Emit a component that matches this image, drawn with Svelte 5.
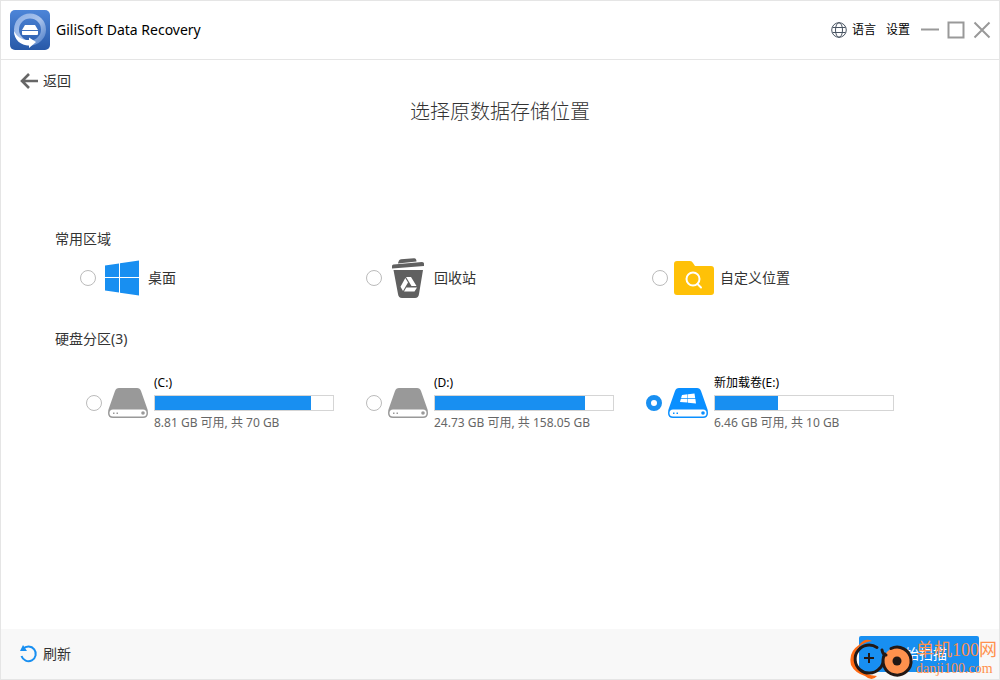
<script>
	const places = [
		{ id: "desktop", label: "桌面" },
		{ id: "trash", label: "回收站" },
		{ id: "custom", label: "自定义位置" }
	];

	const drives = [
		{ id: "c", name: "(C:)", free: "8.81", total: "70", used: 87.4 },
		{ id: "d", name: "(D:)", free: "24.73", total: "158.05", used: 84.4 },
		{ id: "e", name: "新加载卷(E:)", free: "6.46", total: "10", used: 35.4 }
	];

	let selected = $state("e");
</script>

<div class="window">
	<header class="titlebar">
		<svg class="logo" viewBox="0 0 40 40" aria-hidden="true">
			<defs>
				<linearGradient id="logo-bg" x1="0" y1="0" x2="0" y2="1">
					<stop offset="0" stop-color="#4d85d8" />
					<stop offset="1" stop-color="#2859a8" />
				</linearGradient>
				<linearGradient id="logo-ring" x1="0" y1="0" x2="1" y2="1">
					<stop offset="0" stop-color="#8eb0e6" />
					<stop offset="0.5" stop-color="#a9c3ec" />
					<stop offset="1" stop-color="#5583ca" />
				</linearGradient>
			</defs>
			<rect width="40" height="40" rx="5" fill="url(#logo-bg)" />
			<circle cx="20" cy="19.5" r="13.5" fill="none" stroke="url(#logo-ring)" stroke-width="5" />
			<path d="M4 21C4 30 11 35.500 19 35.500V38L26 32L19 27.500V30C13 30.500 7 27.500 4 21Z" fill="#fff" />
			<path d="M15 15H25L28 20V24Q28 25 27 25H13Q12 25 12 24V20Z" fill="#fff" />
			<path d="M12 20.500H28" stroke="#3d70be" />
		</svg>
		<h1>GiliSoft Data Recovery</h1>
		<nav class="tools">
			<button class="tool">
				<svg width="16" height="16" viewBox="0 0 16 16" fill="none" stroke="#4a5563" aria-hidden="true">
					<circle cx="8" cy="8" r="7.3" />
					<ellipse cx="8" cy="8" rx="3.5" ry="7.3" />
					<path d="M1.500 5.500H14.500M1.500 10.500H14.500" />
				</svg>
				语言
			</button>
			<button class="tool">设置</button>
			<button class="control" aria-label="最小化">
				<svg viewBox="0 0 18 18"><path d="M0 8.500H18" /></svg>
			</button>
			<button class="control" aria-label="最大化">
				<svg viewBox="0 0 18 18"><path d="M1.500 1.500H16.500V16.500H1.500Z" /></svg>
			</button>
			<button class="control" aria-label="关闭">
				<svg viewBox="0 0 18 18"><path d="M1.500 1.500L16.500 16.500M16.500 1.500L1.500 16.500" /></svg>
			</button>
		</nav>
	</header>

	<main>
		<button class="link">
			<svg width="18" height="16" viewBox="0 0 18 16" fill="none" stroke="#666" stroke-width="2.6" aria-hidden="true">
				<path d="M9 1L2 8L9 15M2 8H18" />
			</svg>
			返回
		</button>
		<h2>选择原数据存储位置</h2>

		<section>
			<h3>常用区域</h3>
			<div class="places">
				{#each places as place}
					<label class="place">
						<input type="radio" name="source" value={place.id} bind:group={selected} />
						{#if place.id === "desktop"}
							<svg width="40" height="40" viewBox="0 0 40 40" fill="#188ff1" aria-hidden="true">
								<path d="M3 7.500L17 5.500V19H3ZM18 5.300L37 2.500V19H18ZM3 20H17V34.500L3 32.500ZM18 20H37V37.500L18 34.800Z" />
							</svg>
						{:else if place.id === "trash"}
							<svg width="40" height="40" viewBox="0 0 40 40" fill="#606060" aria-hidden="true">
								<path d="M10 5L11 2.500Q11.500 1.500 13 1.300L26 .2Q28 0 28.300 2L28.500 3.500L10 5.500Z" />
								<path d="M4 8Q4 6.800 5.500 6.600L34 4Q36 4 36 5.500V8L4 10.500Z" />
								<path d="M5.500 12H35L31 36Q30.500 40 27 40H14Q10.500 40 10 36Z" />
								<path d="M18 19H23L28.500 28H23.500ZM17.300 20L20 24.500L15 33L12.500 28.700ZM18.300 29.500H29L26.500 33.500H16Z" fill="#fff" />
							</svg>
						{:else}
							<svg width="40" height="40" viewBox="0 0 40 40" aria-hidden="true">
								<path d="M3 3H16Q18 3 19 5L21 8H37Q40 8 40 11V34Q40 37 37 37H3Q0 37 0 34V6Q0 3 3 3Z" fill="#ffc107" />
								<g fill="none" stroke="#fff" stroke-width="2">
									<circle cx="19" cy="21" r="6.500" />
									<path d="M23.500 26L27 29.500" stroke-linecap="round" />
								</g>
							</svg>
						{/if}
						<span>{place.label}</span>
					</label>
				{/each}
			</div>
		</section>

		<section>
			<h3>硬盘分区({drives.length})</h3>
			<div class="drives">
				{#each drives as drive}
					<label class="drive" class:system={drive.id === "e"}>
						<input type="radio" name="source" value={drive.id} bind:group={selected} />
						<svg width="40" height="30" viewBox="0 0 40 30" aria-hidden="true">
							<path class="body" d="M11 0H29Q32 0 33 3L39 20Q40 22 40 25Q40 30 35 30H5Q0 30 0 25Q0 22 1 20L7 3Q8 0 11 0Z" />
							<rect x="1.500" y="21.500" width="37" height="7" rx="3.500" fill="#fff" />
							<circle class="body" cx="35" cy="25" r="1.800" />
							<path class="body" d="M5 24.500H6.500V26H5ZM8.500 24.500H10V26H8.500Z" />
							{#if drive.id === "e"}
								<path d="M14 7L19.500 6.300V10.300H13ZM20 6.200L26.500 5.500L27.200 10.300H20ZM12.800 11H19.500V14.500L12 14ZM20 11H27.400L28 15.500L20 14.700Z" fill="#fff" />
							{/if}
						</svg>
						<span class="details">
							<span class="name">{drive.name}</span>
							<span class="bar"><span class="used" style="width: {drive.used}%"></span></span>
							<span class="size">{drive.free} GB 可用, 共 {drive.total} GB</span>
						</span>
					</label>
				{/each}
			</div>
		</section>
	</main>

	<footer>
		<button class="link">
			<svg width="18" height="18" viewBox="0 0 18 18" aria-hidden="true">
				<path d="M3 4A7.300 7.300 0 1 1 1.500 11" fill="none" stroke="#188ff1" stroke-width="2" />
				<path d="M3 0L7 6L0 6Z" fill="#188ff1" />
			</svg>
			刷新
		</button>
		<button class="scan">开始扫描</button>
		<div class="stamp">
			<svg width="64" height="42" viewBox="0 0 64 42" fill="none" aria-hidden="true">
				<path d="M22 3Q15-1 9 7Q-2 14 1 27Q5 35 15 38Q22 44 27 38Q15 37 9 31Q0 19 9 9Q14 4 22 3Z" fill="#ff6a13" />
				<path d="M27 9.500A14 14 0 1 0 29 31Q34 27 34 18" stroke="#231815" stroke-width="3" stroke-linecap="round" />
				<circle cx="47" cy="23" r="13.500" fill="#ff914d" />
				<path d="M32 12Q33 17 36 17M41 10.500A14 14 0 1 1 35 16" stroke="#231815" stroke-width="3" stroke-linecap="round" />
				<circle cx="47" cy="23" r="4.500" fill="#231815" />
				<path d="M19 15V25M14 20H24" stroke="#231815" stroke-width="2" />
			</svg>
			<span class="stamp-text">
				<span class="stamp-name">单机100网</span>
				<span class="stamp-site">danji100.com</span>
			</span>
		</div>
	</footer>
</div>

<style>
	:global(body) {
		margin: 0;
	}

	.window {
		display: flex;
		flex-direction: column;
		min-height: 100vh;
		box-sizing: border-box;
		border: 1px solid #e5e5e5;
		background: #fff;
		color: #333;
		font: 14px/20px "Noto Sans", "Noto Sans CJK SC", sans-serif;
	}

	button {
		padding: 0;
		border: 0;
		background: none;
		color: inherit;
		font: inherit;
		cursor: pointer;
	}

	svg {
		display: block;
		flex: none;
	}

	h1,
	h2,
	h3 {
		margin: 0;
		font-size: 14px;
		font-weight: 400;
	}

	.titlebar {
		display: flex;
		align-items: center;
		height: 58px;
		padding: 0 8px 0 9px;
		border-bottom: 1px solid #e5e5e5;
		color: #000;
	}

	.logo {
		width: 40px;
		height: 40px;
		margin-right: 6px;
	}

	.tools {
		display: flex;
		align-items: center;
		gap: 10px;
		margin-left: auto;
		font-size: 12px;
	}

	.tool {
		display: flex;
		align-items: center;
		gap: 5px;
	}

	.tool + .control {
		margin-left: 1px;
	}

	.control svg {
		width: 18px;
		height: 18px;
		fill: none;
		stroke: #999;
		stroke-width: 2;
	}

	.control + .control {
		margin-left: -2px;
	}

	main {
		flex: 1;
		padding-top: 11px;
	}

	.link {
		display: flex;
		align-items: center;
		gap: 5px;
		margin-left: 19px;
	}

	h2 {
		color: #333;
		font-size: 20px;
		font-weight: 300;
		line-height: 28px;
		margin: 7px 0 103px;
		text-align: center;
	}

	h3 {
		margin-left: 54px;
	}

	.places,
	.drives {
		display: grid;
		grid-template-columns: repeat(3, 1fr);
	}

	.places {
		margin: 9px 61px 31px 79px;
	}

	.place,
	.drive {
		display: flex;
		align-items: center;
		gap: 6px;
	}

	.drives {
		margin: 24px 73px 0 85px;
	}

	input {
		flex: none;
		appearance: none;
		width: 16px;
		height: 16px;
		margin: 0;
		border: 1px solid #bbb;
		border-radius: 50%;
		background: #fff;
	}

	input:checked {
		border: 5px solid #188ff1;
	}

	.body {
		fill: #999;
	}

	.system .body {
		fill: #0a8fff;
	}

	.details {
		display: flex;
		flex-direction: column;
		flex: 0 1 180px;
		gap: 2px;
		font-size: 12px;
	}

	.name {
		color: #000;
	}

	.bar {
		height: 14px;
		border: 1px solid #d5d5d5;
	}

	.used {
		display: block;
		height: 100%;
		background: #188ff1;
	}

	.size {
		color: #666;
	}

	footer {
		position: relative;
		display: flex;
		align-items: center;
		justify-content: space-between;
		height: 50px;
		padding-right: 20px;
		background: #f8f8f8;
	}

	.scan {
		width: 120px;
		height: 36px;
		border-radius: 2px;
		background: #188ff1;
		color: #fff;
	}

	.stamp {
		position: absolute;
		right: 2px;
		bottom: -1px;
		display: flex;
		align-items: center;
		gap: 2px;
		color: #ff914d;
		pointer-events: none;
	}

	.stamp-text {
		display: flex;
		flex-direction: column;
		font-family: "Liberation Serif", "Noto Sans CJK SC", serif;
		white-space: nowrap;
	}

	.stamp-name {
		font-size: 18px;
	}

	.stamp-site {
		font-size: 14px;
		line-height: 18px;
	}
</style>
